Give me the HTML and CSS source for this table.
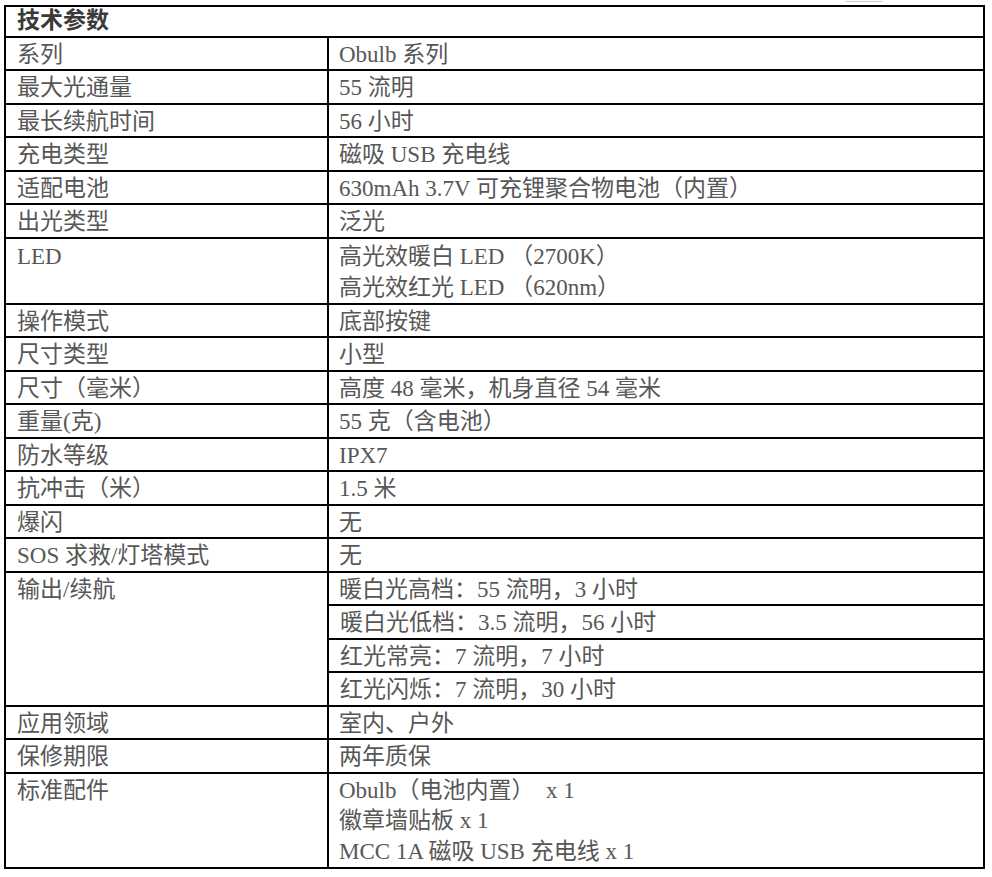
FILE: index.html
```html
<!DOCTYPE html>
<html lang="zh-CN">
<head>
<meta charset="utf-8">
<title>技术参数</title>
<link rel="stylesheet" href="styles.css">
</head>
<body>
<div class="mark"></div>
<table class="spec">
  <colgroup><col class="c1"><col class="c2"></colgroup>
  <tr class="head"><th colspan="2">技术参数</th></tr>
  <tr><td>系列</td><td>Obulb 系列</td></tr>
  <tr><td>最大光通量</td><td>55 流明</td></tr>
  <tr><td>最长续航时间</td><td>56 小时</td></tr>
  <tr><td>充电类型</td><td>磁吸 USB 充电线</td></tr>
  <tr><td>适配电池</td><td>630mAh 3.7V 可充锂聚合物电池（内置）</td></tr>
  <tr><td>出光类型</td><td>泛光</td></tr>
  <tr class="two"><td>LED</td><td>高光效暖白 LED （2700K）<br>高光效红光 LED （620nm）</td></tr>
  <tr><td>操作模式</td><td>底部按键</td></tr>
  <tr><td>尺寸类型</td><td>小型</td></tr>
  <tr><td>尺寸（毫米）</td><td>高度 48 毫米，机身直径 54 毫米</td></tr>
  <tr><td>重量(克)</td><td>55 克（含电池）</td></tr>
  <tr><td>防水等级</td><td>IPX7</td></tr>
  <tr><td>抗冲击（米）</td><td>1.5 米</td></tr>
  <tr><td>爆闪</td><td>无</td></tr>
  <tr><td>SOS 求救/灯塔模式</td><td>无</td></tr>
  <tr><td rowspan="4">输出/续航</td><td>暖白光高档：55 流明，3 小时</td></tr>
  <tr><td>暖白光低档：3.5 流明，56 小时</td></tr>
  <tr><td>红光常亮：7 流明，7 小时</td></tr>
  <tr><td>红光闪烁：7 流明，30 小时</td></tr>
  <tr><td>应用领域</td><td>室内、户外</td></tr>
  <tr><td>保修期限</td><td>两年质保</td></tr>
  <tr class="three"><td>标准配件</td><td>Obulb（电池内置） &nbsp;x 1<br>徽章墙贴板 x 1<br>MCC 1A 磁吸 USB 充电线 x 1</td></tr>
</table>
</body>
</html>
```
FILE: styles.css
```css
html, body {
  margin: 0;
  padding: 0;
  background: #ffffff;
}

body {
  font-family: "Liberation Serif", "Noto Sans CJK SC", serif;
  font-size: 23px;
  color: #575757;
}

.mark {
  position: absolute;
  left: 846px;
  top: 1px;
  width: 36px;
  height: 1px;
  background: #c8c8c8;
}

.spec {
  border-collapse: collapse;
  table-layout: fixed;
  width: 979px;
  margin: 5px 0 0 4px;
  border: 2px solid #000;
}

.c1 { width: 323px; }
.c2 { width: 656px; }

.spec th,
.spec td {
  border: 2px solid #000;
  padding: 2px 10px 0 11px;
  line-height: 29.5px;
  vertical-align: top;
  text-align: left;
  white-space: nowrap;
}

.spec td + td {
  padding-left: 10px;
}

.spec th {
  font-weight: bold;
  color: #3a3a3a;
  padding-top: 0;
  line-height: 28.5px;
}

.two td {
  line-height: 31px;
}

.three td {
  line-height: 30.6px;
}
```
